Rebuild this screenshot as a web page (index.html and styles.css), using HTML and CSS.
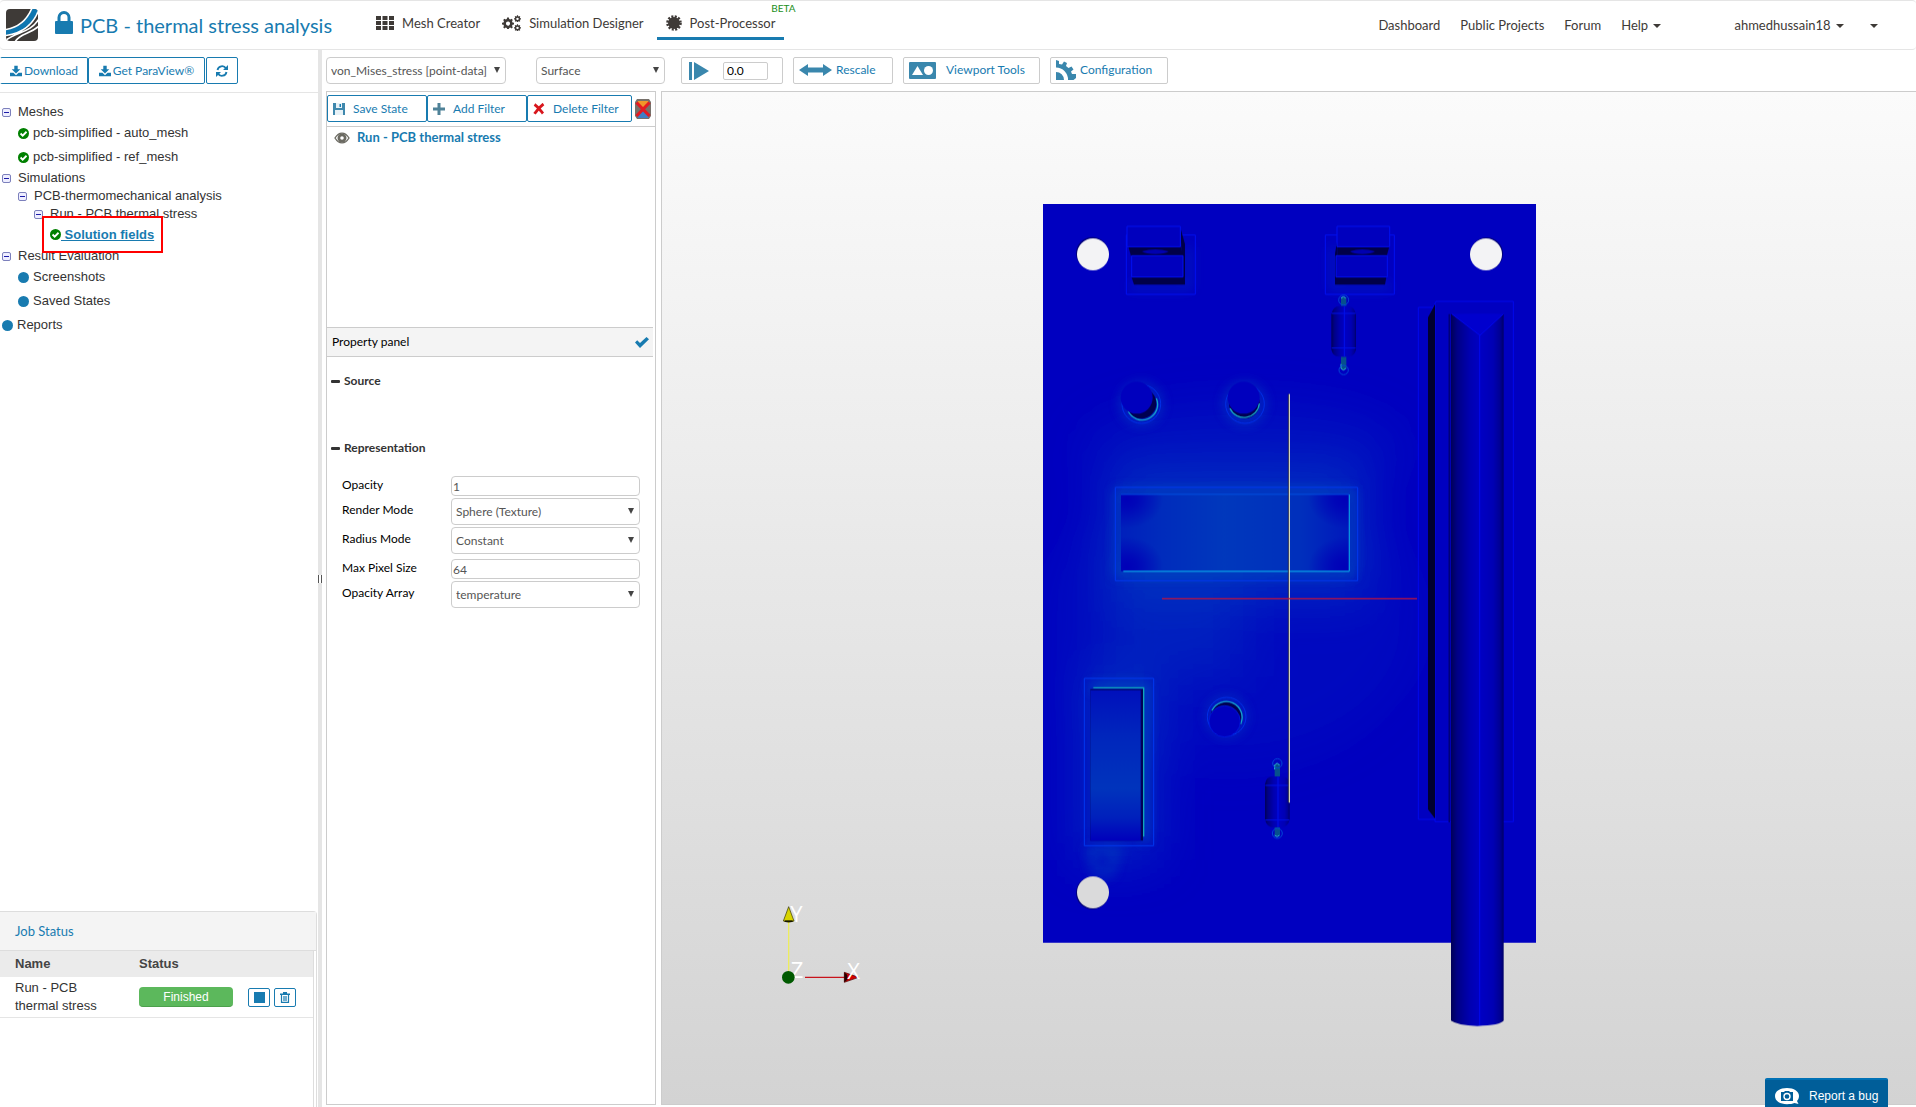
FILE: index.html
```html
<!DOCTYPE html>
<html lang="en">
<head>
    <meta charset="UTF-8">
    <title>PCB - thermal stress analysis</title>
    <meta name="viewport" content="width=device-width, initial-scale=1.0">
    <link rel="stylesheet" href="styles.css">
</head>
<body>
    <!-- shared icons -->
    <svg class="sprite" aria-hidden="true">
        <symbol id="i-download" viewBox="0 0 14 14">
            <path d="M5 1h4v4h3L7 10 2 5h3zM0 9h4l3 3 3-3h4v4H0z"/>
        </symbol>
        <symbol id="i-check" viewBox="0 0 12 12">
            <circle cx="6" cy="6" r="6" fill="#008000"/>
            <path d="M2.800 6l2.300 2.300L9.300 4.100" fill="none" stroke="#fff" stroke-width="2"/>
        </symbol>
        <symbol id="i-dot" viewBox="0 0 12 12">
            <circle cx="6" cy="6" r="6" fill="#187bb0"/>
        </symbol>
        <symbol id="i-gear" viewBox="0 0 20 20">
            <path fill-rule="evenodd" d="M8.500 1h3l.5 2.500 1.800.8L16 3l2 2-1.300 2.200.8 1.800 2.500.5v3l-2.500.5-.8 1.800L18 17l-2 2-2.200-1.300-1.800.8-.5 1.500h-3L8 18.500l-1.800-.8L4 19l-2-2 1.300-2.200L2.500 13 0 12.500v-3L2.500 9l.8-1.800L2 5l2-2 2.200 1.300L8 3.500zM10 7.500a3.500 3.500 0 100 7 3.500 3.500 0 000-7z"/>
        </symbol>
    </svg>

    <header class="topbar">
        <a class="logo" href="#" aria-label="Home">
            <svg width="32" height="32" viewBox="0 0 32 32">
                <clipPath id="logo-shape"><rect width="32" height="32" rx="4"/></clipPath>
                <g clip-path="url(#logo-shape)">
                    <path d="M0 0h32v32H0z" fill="#3e3a37"/>
                    <path d="M0 21C12 19 21 12 26 0h7C28 15 17 24 0 26z" fill="#0e76b0"/>
                    <path d="M0 20.500C12 18.500 21 11 26-1M0 26.500C17 24 28 15 33 0M0 31C12 22 24 24 33 10M9 33c5-9 14-7 24-16" fill="none" stroke="#fff" stroke-width="1.600"/>
                </g>
            </svg>
        </a>
        <svg class="lock" width="18" height="23" viewBox="0 0 18 23">
            <path d="M4 11V6.500a5 5 0 0110 0V11" fill="none" stroke="#187bb0" stroke-width="3"/>
            <rect y="10" width="18" height="13" rx="1" fill="#187bb0"/>
        </svg>
        <h1 class="project-title">PCB - thermal stress analysis</h1>

        <nav class="modes">
            <a class="mode" href="#">
                <svg width="18" height="14" viewBox="0 0 18 14">
                    <path d="M0 0h5v4H0zM6.500 0h5v4h-5zM13 0h5v4h-5zM0 5h5v4H0zM6.500 5h5v4h-5zM13 5h5v4h-5zM0 10h5v4H0zM6.500 10h5v4h-5zM13 10h5v4h-5z"/>
                </svg>
                Mesh Creator
            </a>
            <a class="mode" href="#">
                <svg width="19" height="18" viewBox="0 0 19 18">
                    <use href="#i-gear" y="3" width="12" height="12"/>
                    <use href="#i-gear" x="12" y="1" width="7" height="7"/>
                    <use href="#i-gear" x="12" y="10" width="7" height="7"/>
                </svg>
                Simulation Designer
            </a>
            <a class="mode mode-active" href="#">
                <svg width="16" height="16" viewBox="0 0 16 16">
                    <circle cx="8" cy="8" r="6"/>
                    <circle cx="8" cy="8" r="6.500" fill="none" stroke="#3e3a37" stroke-width="2.600" stroke-dasharray="2 1.400"/>
                </svg>
                Post-Processor
                <span class="beta">BETA</span>
            </a>
        </nav>

        <nav class="links">
            <a href="#">Dashboard</a>
            <a href="#">Public Projects</a>
            <a href="#">Forum</a>
            <a href="#">Help <i class="caret"></i></a>
            <a class="user" href="#">ahmedhussain18 <i class="caret"></i></a>
            <a class="more" href="#" aria-label="More"><i class="caret"></i></a>
        </nav>
    </header>

    <main class="workspace">
        <aside class="sidebar">
            <div class="sidebar-buttons">
                <button class="btn btn-download"><svg width="12" height="12"><use href="#i-download"/></svg>Download</button>
                <button class="btn btn-paraview"><svg width="12" height="12"><use href="#i-download"/></svg>Get ParaView®</button>
                <button class="btn btn-refresh" aria-label="Refresh">
                    <svg width="12" height="12" viewBox="0 0 12 12">
                        <path d="M1.500 5A4.600 4.600 0 0110 3.500M10.500 7A4.600 4.600 0 012 8.500" fill="none" stroke="#187bb0" stroke-width="1.800"/>
                        <path d="M12 0v5H7zM0 12V7h5z"/>
                    </svg>
                </button>
            </div>

            <ul class="tree">
                <li>
                    <div class="branch"><button class="toggle" aria-label="Collapse"></button>Meshes</div>
                    <ul>
                        <li class="leaf"><svg width="11" height="11"><use href="#i-check"/></svg>pcb-simplified - auto_mesh</li>
                        <li class="leaf"><svg width="11" height="11"><use href="#i-check"/></svg>pcb-simplified - ref_mesh</li>
                    </ul>
                </li>
                <li>
                    <div class="branch"><button class="toggle" aria-label="Collapse"></button>Simulations</div>
                    <ul>
                        <li>
                            <div class="branch"><button class="toggle" aria-label="Collapse"></button>PCB-thermomechanical analysis</div>
                            <ul>
                                <li>
                                    <div class="branch"><button class="toggle" aria-label="Collapse"></button>Run - PCB thermal stress</div>
                                    <ul>
                                        <li class="leaf leaf-marked"><svg width="11" height="11"><use href="#i-check"/></svg><a href="#">&nbsp;Solution fields</a></li>
                                    </ul>
                                </li>
                            </ul>
                        </li>
                    </ul>
                </li>
                <li>
                    <div class="branch"><button class="toggle" aria-label="Collapse"></button>Result Evaluation</div>
                    <ul>
                        <li class="leaf"><svg width="11" height="11"><use href="#i-dot"/></svg>Screenshots</li>
                        <li class="leaf"><svg width="11" height="11"><use href="#i-dot"/></svg>Saved States</li>
                    </ul>
                </li>
                <li class="leaf"><svg width="11" height="11"><use href="#i-dot"/></svg>Reports</li>
            </ul>

            <section class="jobs">
                <h2>Job Status</h2>
                <table>
                    <thead>
                        <tr><th class="col-name">Name</th><th class="col-status">Status</th><th></th></tr>
                    </thead>
                    <tbody>
                        <tr>
                            <td>Run - PCB thermal stress</td>
                            <td><span class="badge">Finished</span></td>
                            <td>
                                <div class="job-actions">
                                    <button class="btn btn-icon" aria-label="Stop"><svg width="11" height="11" viewBox="0 0 11 11"><path d="M0 0h11v11H0z"/></svg></button>
                                    <button class="btn btn-icon" aria-label="Delete">
                                        <svg width="10" height="11" viewBox="0 0 10 11">
                                            <path d="M0 1.500h3V0h4v1.500h3V3H0z"/>
                                            <path d="M1.500 3v7.300h7V3M4 4v5M6 4v5" fill="none" stroke="#187bb0" stroke-width="1.200"/>
                                        </svg>
                                    </button>
                                </div>
                            </td>
                        </tr>
                    </tbody>
                </table>
            </section>
        </aside>

        <div class="splitter"><span class="grip"></span></div>

        <div class="post">
            <div class="toolbar">
                <div class="select select-field">
                    <select aria-label="Field"><option>von_Mises_stress [point-data]</option></select>
                </div>
                <div class="select select-surface">
                    <select aria-label="Representation"><option>Surface</option></select>
                </div>
                <div class="tool tool-time">
                    <button class="play" aria-label="Play">
                        <svg width="20" height="18" viewBox="0 0 20 18"><path d="M0 0h3v18H0zM5 0l15 9L5 18z"/></svg>
                    </button>
                    <input type="text" value="0.0" aria-label="Time">
                </div>
                <button class="tool tool-rescale">
                    <svg width="33" height="12" viewBox="0 0 33 12"><path d="M0 6l9-6v3.500h15V0l9 6-9 6V8.500H9V12z"/></svg>
                    Rescale
                </button>
                <button class="tool tool-viewport">
                    <svg width="27" height="17" viewBox="0 0 27 17">
                        <rect width="27" height="17" rx="1"/>
                        <path d="M3 13L8.500 4 14 13z" fill="#fff"/>
                        <circle cx="19.500" cy="8.500" r="4.500" fill="#fff"/>
                    </svg>
                    Viewport Tools
                </button>
                <button class="tool tool-config">
                    <svg width="20" height="20" viewBox="0 0 20 20">
                        <path fill-rule="evenodd" d="M0 0l3 1v3l3 .5L8 1.500l3 1.500-1 3 2.500 2 3-1.500 2 3-2.500 2 1 2.500H20v4l-2.500 2H12A12 12 0 000 7.500zM0 12a8 8 0 018 8H0z"/>
                    </svg>
                    Configuration
                </button>
            </div>

            <div class="panes">
                <section class="panel">
                    <div class="filter-buttons">
                        <button class="btn btn-filter">
                            <svg width="12" height="12" viewBox="0 0 12 12"><path d="M0 0h12v12H0z" fill="#3f88ad"/><path d="M3 0h6v5H3zM2 7h8v5H2z" fill="#e8f2f7"/><path d="M6.500 1h1.500v3H6.500z"/></svg>
                            Save State
                        </button>
                        <button class="btn btn-filter">
                            <svg width="12" height="12" viewBox="0 0 12 12"><path d="M4.500 0h3v4.500H12v3H7.500V12h-3V7.500H0v-3h4.500z" fill="#4f8298"/></svg>
                            Add Filter
                        </button>
                        <button class="btn btn-filter btn-delete">
                            <svg width="12" height="12" viewBox="0 0 12 12"><path d="M1.500 1.500c3 2 6 6 8.500 9M10.500 1C7 3.500 4 7 1.500 10.800" fill="none" stroke="#d8161c" stroke-width="2.800"/></svg>
                            Delete Filter
                        </button>
                        <button class="clear" aria-label="Delete all filters">
                            <svg width="16" height="20" viewBox="0 0 16 20">
                                <path d="M2 0h12l2 3v14l-2 3H2l-2-3V3z" fill="#77716b"/>
                                <path d="M3 2h10l1 3-6 4-6-4z" fill="#f0962a"/>
                                <path d="M8 11l6 4-1 4H3l-1-4z" fill="#3f7fc4"/>
                                <path d="M1.500 3.500l13 13.500M14.500 3.500L1.500 17" stroke="#e31b23" stroke-width="3.200"/>
                            </svg>
                        </button>
                    </div>

                    <div class="pipeline">
                        <svg width="16" height="12" viewBox="0 0 16 12">
                            <path d="M1 6c4-6.500 10-6.500 14 0-4 6.500-10 6.500-14 0z" fill="#fff" stroke="#6b6a62" stroke-width="1.400"/>
                            <circle cx="8" cy="6" r="4.500" fill="#6b6a62"/>
                            <circle cx="8" cy="6" r="1.800" fill="#fff"/>
                        </svg>
                        <a href="#">Run - PCB thermal stress</a>
                    </div>

                    <div class="property-head">
                        Property panel
                        <button aria-label="Apply"><svg width="14" height="11" viewBox="0 0 14 11"><path d="M0 5.500L2.200 3.300 5 6 11.500 0 14 2.200 5 11z"/></svg></button>
                    </div>

                    <h3>Source</h3>
                    <h3 class="representation">Representation</h3>
                    <form class="props">
                        <div class="prop prop-text"><label for="opacity">Opacity</label><input id="opacity" type="text" value="1"></div>
                        <div class="prop"><label for="render-mode">Render Mode</label><div class="select"><select id="render-mode"><option>Sphere (Texture)</option></select></div></div>
                        <div class="prop"><label for="radius-mode">Radius Mode</label><div class="select"><select id="radius-mode"><option>Constant</option></select></div></div>
                        <div class="prop prop-text prop-pixel"><label for="max-pixel">Max Pixel Size</label><input id="max-pixel" type="text" value="64"></div>
                        <div class="prop"><label for="opacity-array">Opacity Array</label><div class="select"><select id="opacity-array"><option>temperature</option></select></div></div>
                    </form>
                </section>

                <section class="viewer">
                    <svg class="scene" viewBox="-1104 -294 3762 3036" role="img" aria-label="Von Mises stress on the board">
                        <defs>
                            <linearGradient id="tube">
                                <stop offset="0" stop-color="#000058"/>
                                <stop offset=".12" stop-color="#000086"/>
                                <stop offset=".35" stop-color="#0000b0"/>
                                <stop offset=".55" stop-color="#0000c4"/>
                                <stop offset=".8" stop-color="#0000b4"/>
                                <stop offset=".93" stop-color="#000094"/>
                                <stop offset="1" stop-color="#000068"/>
                            </linearGradient>
                            <linearGradient id="chip-x">
                                <stop offset="0" stop-color="#0020bc"/>
                                <stop offset=".18" stop-color="#002cbc"/>
                                <stop offset=".45" stop-color="#0038bc"/>
                                <stop offset=".78" stop-color="#0030bc"/>
                                <stop offset="1" stop-color="#0018bc"/>
                            </linearGradient>
                            <linearGradient id="chip-y" x2="0" y2="1">
                                <stop offset="0" stop-color="#0010bc"/>
                                <stop offset=".3" stop-color="#0026bc"/>
                                <stop offset=".65" stop-color="#0034bc"/>
                                <stop offset=".85" stop-color="#0020bc"/>
                                <stop offset="1" stop-color="#0000bc"/>
                            </linearGradient>
                            <radialGradient id="cool">
                                <stop offset="0" stop-color="#0000b8"/>
                                <stop offset=".3" stop-color="#0000b8" stop-opacity=".8"/>
                                <stop offset="1" stop-color="#0000b8" stop-opacity="0"/>
                            </radialGradient>
                            <filter id="soft" x="-50%" y="-50%" width="200%" height="200%"><feGaussianBlur stdDeviation="75"/></filter>
                            <filter id="near" x="-50%" y="-50%" width="200%" height="200%"><feGaussianBlur stdDeviation="18"/></filter>
                            <clipPath id="board"><path d="M39 42h1479v2216H39z"/></clipPath>
                            <clipPath id="chip"><path d="M273 912h684v231H273z"/></clipPath>
                            <g id="resistor" fill="none">
                                <path d="M-8-76h16v-26H-8zM-8 76H8v38H-8z" fill="#06508c"/>
                                <path d="M-8 98v12q8 12 14 0M-8-100q8-8 14 0" stroke="#30c0d0" stroke-width="3"/>
                                <circle cy="-94" r="15" stroke="#0048d8" stroke-width="3"/>
                                <circle cy="116" r="14" stroke="#0048d8" stroke-width="3"/>
                                <path d="M-37-52q6-24 24-24h26q18 0 24 24V54q-4 22-22 22h-30q-18 0-22-22z" fill="url(#tube)"/>
                                <path d="M-36-54h72M-36 50h72M2-76V76" stroke="#0010e8" stroke-width="3"/>
                            </g>
                        </defs>

                        <path d="M39 42h1479v2216H39z" fill="#0000c0"/>
                        <g clip-path="url(#board)">
                            <!-- stress spread -->
                            <g filter="url(#soft)" fill="#0048c0">
                                <rect x="230" y="840" width="780" height="380" opacity=".6"/>
                                <rect x="220" y="1130" width="420" height="330" opacity=".35"/>
                                <rect x="150" y="1450" width="230" height="560" opacity=".55"/>
                                <ellipse cx="640" cy="780" rx="480" ry="130" opacity=".22"/>
                                <ellipse cx="600" cy="1300" rx="560" ry="420" opacity=".12"/>
                            </g>
                            <g filter="url(#near)" fill="none" stroke="#0078c0" stroke-width="16">
                                <path d="M265 905h700v245H265z" opacity=".5"/>
                                <path d="M180 1490h165v465" opacity=".6"/>
                                <path d="M180 1980h80l-20 70h-40z" opacity=".4"/>
                                <circle cx="333" cy="640" r="52" opacity=".5"/>
                                <circle cx="644" cy="640" r="52" opacity=".5"/>
                                <circle cx="590" cy="1580" r="50" opacity=".4"/>
                                <path d="M300 290h175V170M910 170v120h170" opacity=".25"/>
                            </g>
                        </g>

                        <!-- mounting holes -->
                        <g fill="#000078"><circle cx="187" cy="190" r="49"/><circle cx="1370" cy="191" r="49"/><circle cx="187" cy="2109" r="49"/></g>
                        <g fill="#f3f3f5"><circle cx="189" cy="193" r="48"/><circle cx="1368" cy="193" r="48"/></g>
                        <circle cx="189" cy="2107" r="48" fill="#dadadb"/>

                        <!-- connectors -->
                        <g stroke-width="3" stroke="#0010f0">
                            <path d="M289 135h207v178H289zM886 135h207v178H886z" fill="none"/>
                            <path d="M451 112l14 50v122H312l-7-22h150V197z" fill="#000048" stroke="none"/>
                            <path d="M295 170h157l8 28H303z" fill="#000048" stroke="none"/>
                            <path d="M291 109h160v61H291zM305 197h154v64H305z" fill="#0000be"/>
                            <path d="M922 150l-7 40v94h150l4-22H922z" fill="#000048" stroke="none"/>
                            <path d="M922 170h156l-8 28H922z" fill="#000048" stroke="none"/>
                            <path d="M921 109h158v61H921zM918 197h154v64H918z" fill="#0000be"/>
                            <path d="M336 184q20-6 40-6t40 6q-12 8-40 8t-40-8zM960 184q18-6 37-6t38 6q-12 8-38 8t-37-8z" fill="#0000b0" stroke="none"/>
                        </g>

                        <use href="#resistor" x="941" y="424"/>
                        <use href="#resistor" transform="translate(742 1836) scale(1 -1)"/>

                        <!-- capacitors -->
                        <g fill="none" stroke="#0030e8" stroke-width="3">
                            <circle cx="334" cy="642" r="58"/><circle cx="645" cy="642" r="58"/><circle cx="590" cy="1580" r="58"/>
                        </g>
                        <g fill="#000050">
                            <circle cx="333" cy="640" r="46"/><circle cx="643" cy="640" r="46"/><circle cx="588" cy="1584" r="47"/>
                        </g>
                        <g fill="none" stroke="#16a5c8" stroke-width="4">
                            <path d="M379 625a46 46 0 01-85 37M688 640a46 46 0 01-88 15M546 1562a47 47 0 0186 40"/>
                        </g>
                        <g fill="#0000be">
                            <circle cx="320" cy="623" r="48"/><circle cx="641" cy="623" r="48"/>
                            <circle cx="584" cy="1594" r="47" stroke="#0020e8" stroke-width="2"/>
                        </g>

                        <!-- chips -->
                        <g fill="none" stroke="#0038f0" stroke-width="3">
                            <path d="M256 892h727v280H256zM163 1465h208v502H163z"/>
                        </g>
                        <path d="M273 912h684v231H273z" fill="url(#chip-x)"/>
                        <g clip-path="url(#chip)" fill="url(#cool)">
                            <ellipse cx="290" cy="925" rx="110" ry="90"/>
                            <ellipse cx="290" cy="1130" rx="110" ry="90"/>
                            <ellipse cx="945" cy="925" rx="110" ry="90"/>
                            <ellipse cx="945" cy="1130" rx="110" ry="90"/>
                        </g>
                        <path d="M273 913h684" stroke="#0050e0" stroke-width="3"/>
                        <path d="M958 914v229M280 1144h678" fill="none" stroke="#0890e0" stroke-width="4"/>
                        <path d="M181 1497h158v455H181z" fill="#000058"/>
                        <path d="M181 1500h151v452H181z" fill="url(#chip-y)"/>
                        <path d="M190 1493h151v447" fill="none" stroke="#10a8b8" stroke-width="4"/>

                        <!-- heat sink and tube -->
                        <g fill="none" stroke="#0008ec" stroke-width="3">
                            <path d="M1215 352h-50v1536h50M1215 342v1553h235V334h-232l-22 48"/>
                        </g>
                        <path d="M1194 382l21-40v1544l-21-28z" fill="#000030"/>
                        <path d="M1258 372v1525" stroke="#000078" stroke-width="5"/>
                        <path d="M1263 372h158v2120q-10 14-79 16-60-2-79-16z" fill="url(#tube)"/>
                        <path d="M1263 371h158l-71 65z" fill="#0000ce"/>
                        <path d="M1266 372l84 64 70-64M1349 436v2070" fill="none" stroke="#0008ec" stroke-width="3"/>

                        <!-- centre cross -->
                        <path d="M775 612v1225" stroke="#202040" stroke-width="3"/>
                        <path d="M778 612v1226" stroke="#fafac0" stroke-width="3"/>
                        <path d="M396 1226h765" stroke="#c0143c" stroke-width="4"/>

                        <!-- orientation axes -->
                        <g transform="translate(-810 2100)">
                            <path d="M86 95v150" stroke="#ecec60" stroke-width="4"/>
                            <path d="M86 50l16 43q-16 8-32 0z" fill="#d8d400" stroke="#303000" stroke-width="2"/>
                            <path d="M74 91h24v5H74z" fill="#151500"/>
                            <path d="M135 262h120" stroke="#c8141c" stroke-width="4"/>
                            <path d="M253 247l43 15-43 15z" fill="#d40000" stroke="#400" stroke-width="2"/>
                            <path d="M253 247v30l9-8v-14z" fill="#200"/>
                            <g class="axis-label">
                                <text x="91" y="96">Y</text>
                                <text x="92" y="265">Z</text>
                                <text x="262" y="267">X</text>
                            </g>
                            <circle cx="85" cy="262" r="19" fill="#005a00"/>
                        </g>
                    </svg>
                </section>
            </div>
        </div>
    </main>

    <button class="report">
        <svg width="24" height="17" viewBox="0 0 24 17">
            <path d="M12 0c7 0 12 3.500 12 8 0 2-1 4-2 5l1.500 3-4-1c-2 .8-4.500 1.200-7.500 1.200C5 16.200 0 13 0 8s5-8 12-8z" fill="#fff"/>
            <path d="M6 4h3l1-1h4l1 1h3v9H6z" fill="#005e99"/>
            <circle cx="12" cy="8.500" r="3" fill="none" stroke="#fff" stroke-width="1.400"/>
        </svg>
        Report a bug
    </button>
</body>
</html>
```
FILE: styles.css
```css
* {
    box-sizing: border-box;
}

body {
    margin: 0;
    height: 100vh;
    display: flex;
    flex-direction: column;
    overflow: hidden;
    background: #fff;
    color: #333;
    font: 13px/18px "Liberation Sans", Arial, sans-serif;
}

button,
input,
select {
    font: 12px/18px Lato, sans-serif;
    margin: 0;
}

button {
    cursor: pointer;
    padding: 0;
}

a {
    color: inherit;
    text-decoration: none;
}

ul {
    list-style: none;
    margin: 0;
    padding: 0;
}

svg {
    flex: none;
}

.sprite {
    display: none;
}

/* top bar */
.topbar {
    flex: none;
    display: flex;
    align-items: center;
    height: 50px;
    padding: 0 38px 1px 6px;
    border: 1px solid #e5e5e5;
    border-width: 1px 0;
    border-radius: 4px;
    color: #3e3a37;
    font: 13px/20px Lato, sans-serif;
}

.logo {
    display: flex;
}

.lock {
    margin: 0 7px 4px 17px;
}

.project-title {
    margin: 0;
    color: #187bb0;
    font-size: 20px;
    font-weight: normal;
    line-height: 24px;
}

.modes {
    display: flex;
    gap: 4px;
    margin-left: 35px;
}

.mode {
    position: relative;
    display: flex;
    align-items: center;
    gap: 8px;
    height: 30px;
    padding: 0 9px;
    border-bottom: 3px solid transparent;
    white-space: nowrap;
}

.mode svg {
    fill: #3e3a37;
}

.mode-active {
    border-bottom-color: #187bb0;
}

.beta {
    position: absolute;
    top: -8px;
    right: -11px;
    color: #1b8f1b;
    font-size: 10px;
    line-height: 12px;
}

.links {
    display: flex;
    gap: 20px;
    margin-left: auto;
}

.user {
    margin-left: 53px;
}

.more {
    margin-left: 4px;
}

.caret {
    display: inline-block;
    margin-left: 2px;
    border: 4px solid transparent;
    border-top-color: #3e3a37;
    border-bottom: 0;
    vertical-align: middle;
}

/* shared buttons and drop-downs */
.workspace {
    flex: 1;
    min-height: 0;
    display: flex;
}

.btn {
    display: flex;
    align-items: center;
    justify-content: center;
    gap: 2px;
    height: 27px;
    background: #fff;
    border: 1px solid #187bb0;
    border-radius: 2px;
    color: #187bb0;
    fill: #187bb0;
    white-space: nowrap;
}

.select {
    position: relative;
}

.select::after {
    content: "";
    position: absolute;
    top: 10px;
    right: 6px;
    border: 3px solid transparent;
    border-top: 6px solid #444;
    border-bottom: 0;
    pointer-events: none;
}

.select select {
    display: block;
    width: 100%;
    height: 27px;
    padding: 0 4px;
    appearance: none;
    background: #fff;
    border: 1px solid #ccc;
    border-radius: 4px;
    color: #555;
}

/* sidebar */
.sidebar {
    flex: none;
    width: 318px;
    display: flex;
    flex-direction: column;
}

.sidebar-buttons {
    display: flex;
    padding: 7px 0 8px;
    border-bottom: 1px solid #e5e5e5;
}

.btn-download {
    width: 88px;
    border-left-color: transparent;
}

.btn-paraview {
    width: 117px;
}

.btn-refresh {
    width: 32px;
    margin-left: 1px;
}

.tree {
    flex: 1;
    padding: 10px 0 0 2px;
}

.tree ul {
    padding-left: 16px;
}

.branch {
    display: flex;
    align-items: center;
    gap: 7px;
    height: 18px;
}

.toggle {
    width: 9px;
    height: 9px;
    background: linear-gradient(#1c1ca8, #1c1ca8) center / 5px 1px no-repeat #eef;
    border: 1px solid #7c80bc;
    border-radius: 2px;
}

.leaf {
    display: flex;
    align-items: center;
    gap: 4px;
    height: 24px;
}

.leaf-marked {
    position: relative;
    width: 121px;
    height: 37px;
    margin: -7px 0 -6px -8px;
    padding-left: 6px;
    gap: 0;
    background: #fff;
    border: 2px solid #f00;
    color: #187bb0;
    font-weight: bold;
}

.leaf-marked a {
    text-decoration: underline;
}

/* job table */
.jobs {
    height: 196px;
    margin-right: 1px;
    padding-right: 2px;
    border: 1px solid #ddd;
    border-width: 1px 1px 0 0;
    border-radius: 0 4px 0 0;
}

.jobs h2 {
    margin: 0 -2px 0 0;
    padding: 10px 15px;
    background: #f4f4f4;
    border-bottom: 1px solid #ddd;
    color: #187bb0;
    font: 13px/18px Lato, sans-serif;
}

.jobs table {
    width: 100%;
    height: 156px;
    display: block;
    border-collapse: collapse;
    border-right: 1px solid #ddd;
}

.jobs thead,
.jobs tbody {
    display: block;
}

.jobs tr {
    display: grid;
    grid-template-columns: 124px 109px 1fr;
    align-items: center;
    padding: 4px 0 4px 15px;
}

.jobs thead tr {
    background: #ebebeb;
    color: #444;
}

.jobs tbody tr {
    padding: 2px 0 2px 15px;
    border-bottom: 1px solid #e5e5e5;
}

.jobs th,
.jobs td {
    padding: 0;
    text-align: left;
}

.jobs tbody td:first-child {
    padding-right: 30px;
}

.badge {
    display: block;
    width: 94px;
    height: 20px;
    background: #5cb85c;
    border-bottom: 1px solid #4ca04c;
    border-radius: 4px;
    color: #fff;
    font-size: 12px;
    line-height: 20px;
    text-align: center;
}

.job-actions {
    display: flex;
    gap: 4px;
}

.btn-icon {
    width: 22px;
    height: 19px;
}

.splitter {
    flex: none;
    width: 4px;
    display: flex;
    align-items: center;
    background: #e5e5e5;
}

.grip {
    width: 4px;
    height: 8px;
    border: 1px solid #555;
    border-width: 0 1px;
    background: #fff;
}

/* post-processor */
.post {
    flex: 1;
    min-width: 0;
    display: flex;
    flex-direction: column;
    padding: 7px 0 2px 4px;
}

.toolbar {
    flex: none;
    display: flex;
}

.select-field {
    width: 180px;
    margin-right: 30px;
}

.select-surface {
    width: 129px;
    margin-right: 16px;
}

.tool {
    display: flex;
    align-items: center;
    height: 27px;
    margin-right: 10px;
    padding: 0 5px 1px;
    background: #fff;
    border: 1px solid #ccc;
    border-radius: 2px;
    color: #187bb0;
    fill: #3a87ad;
    white-space: nowrap;
}

.tool-time {
    width: 102px;
    padding: 0 7px;
    gap: 14px;
}

.play {
    display: flex;
    background: none;
    border: 0;
    fill: #3a87ad;
}

.tool-time input {
    width: 45px;
    height: 18px;
    padding: 0 3px;
    border: 1px solid #ccc;
    border-radius: 2px;
    color: #000;
}

.tool-rescale {
    width: 100px;
    gap: 4px;
}

.tool-viewport {
    width: 137px;
    gap: 10px;
}

.tool-config {
    width: 118px;
    gap: 4px;
}

.panes {
    flex: 1;
    min-height: 0;
    display: flex;
    gap: 5px;
    padding-top: 7px;
}

.panel {
    flex: none;
    width: 330px;
    border: 1px solid #ccc;
    color: #000;
    font: 12px/18px Lato, sans-serif;
}

.filter-buttons {
    display: flex;
    padding: 3px 0 4px;
    border-bottom: 1px solid #ccc;
}

.btn-filter {
    width: 100px;
    justify-content: flex-start;
    gap: 8px;
    padding-left: 5px;
}

.btn-delete {
    width: 105px;
}

.clear {
    display: flex;
    align-items: center;
    margin-left: 3px;
    background: none;
    border: 0;
}

.pipeline {
    display: flex;
    align-items: flex-start;
    gap: 7px;
    height: 200px;
    padding: 1px 7px;
    color: #187bb0;
    font-size: 13px;
    font-weight: bold;
}

.pipeline svg {
    margin-top: 4px;
}

.property-head {
    display: flex;
    align-items: center;
    justify-content: space-between;
    height: 30px;
    margin-right: 2px;
    padding: 0 4px 0 5px;
    background: #f4f4f4;
    border: 1px solid #ccc;
    border-width: 1px 0;
}

.property-head button {
    display: flex;
    background: none;
    border: 0;
    fill: #187bb0;
}

.panel h3 {
    display: flex;
    align-items: center;
    gap: 4px;
    margin: 15px 0 0 4px;
    color: #333;
    font-size: 12px;
    line-height: 18px;
}

.panel h3::before {
    content: "";
    width: 9px;
    height: 3px;
    background: #333;
    border-radius: 1px;
}

.panel .representation {
    margin-top: 49px;
}

.props {
    display: flex;
    flex-direction: column;
    gap: 2px;
    margin: 19px 15px 0;
}

.prop {
    display: grid;
    grid-template-columns: 109px 1fr;
}

.prop label {
    padding-top: 3px;
}

.prop-text label {
    padding-top: 0;
}

.prop-pixel {
    margin-top: 3px;
}

.prop input {
    width: 100%;
    height: 20px;
    padding: 1px 1px 0;
    border: 1px solid #ccc;
    border-radius: 4px;
    color: #555;
}

.viewer {
    flex: 1;
    min-width: 0;
    background: linear-gradient(#fbfbfb, #d3d3d3);
    border: 1px solid #ccc;
    border-width: 1px 0 1px 1px;
}

.scene {
    display: block;
    width: 100%;
    height: 100%;
}

.axis-label {
    fill: #fff;
    font: 66px "Open Sans", sans-serif;
}

.report {
    position: fixed;
    right: 28px;
    bottom: 0;
    display: flex;
    align-items: center;
    gap: 10px;
    width: 123px;
    height: 29px;
    padding: 5px 10px 0;
    background: #005e99;
    border: 0;
    border-top: 2px solid #0071b5;
    border-radius: 2px 2px 0 0;
    color: #fff;
    font: 12px/16px "Liberation Sans", Arial, sans-serif;
    white-space: nowrap;
}
```
